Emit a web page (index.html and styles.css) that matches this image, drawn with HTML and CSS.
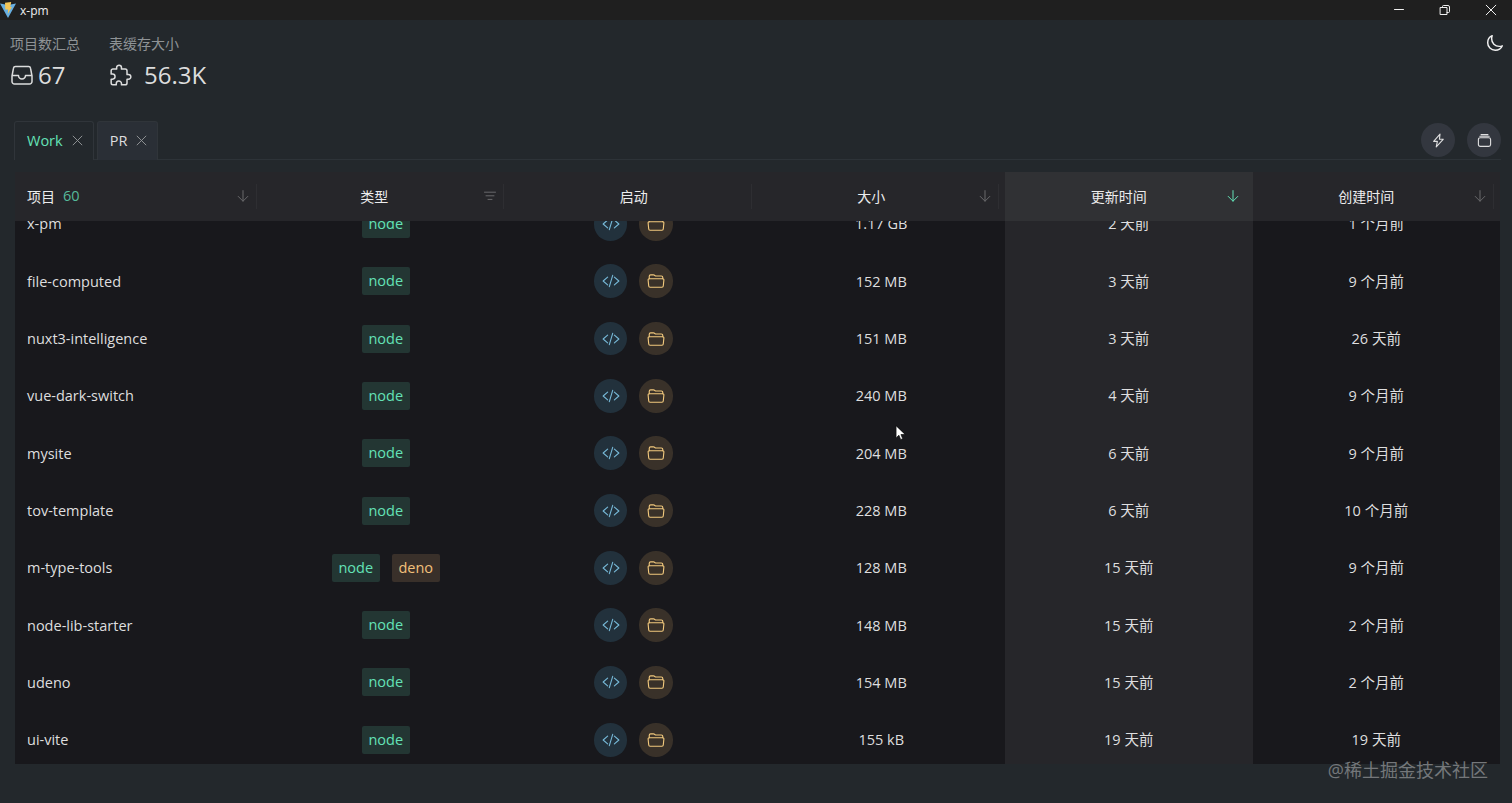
FILE: index.html
```html
<!DOCTYPE html>
<html lang="zh-CN">

<head>
    <meta charset="UTF-8">
    <meta name="viewport" content="width=device-width, initial-scale=1.0">
    <title>x-pm</title>
    <link rel="stylesheet" href="styles.css">
</head>

<body>
    <!-- 图标 -->
    <svg class="icons" width="0" height="0">
        <symbol id="close" viewBox="0 0 12 12">
            <path d="M1.2 1.2l9.6 9.6M10.8 1.2l-9.6 9.6" />
        </symbol>
        <symbol id="arrow" viewBox="0 0 12 12">
            <path d="M6 .6v10.6M1.2 6.4L6 11.2l4.8-4.8" />
        </symbol>
        <symbol id="filter" viewBox="0 0 12 12">
            <path d="M.5 2.2h11M2 5.8h8M4 9.4h4" />
        </symbol>
        <symbol id="code" viewBox="0 0 512 512">
            <path d="M160 368L32 256l128-112M352 368l128-112-128-112M304 96l-96 320" />
        </symbol>
        <symbol id="folder" viewBox="0 0 512 512">
            <path d="M64 192v-72a40 40 0 0 1 40-40h75.900a40 40 0 0 1 22.200 6.700l27.800 18.600a40 40 0 0 0 22.200 6.700H408a40 40 0 0 1 40 40v40" />
            <path d="M480 226.200L463.700 392a40 40 0 0 1-39.900 40H88.100a40 40 0 0 1-39.900-40L32 226.200A32 32 0 0 1 63.900 192H448.100A32 32 0 0 1 480 226.200z" />
        </symbol>
    </svg>

    <div class="main">

        <!-- 窗口标题栏 -->
        <div class="titlebar">
            <svg class="logo" viewBox="0 0 16 16">
                <path fill="#67aee0" d="M0 1.600L8 3l8-1.400L8 16z" />
                <path fill="#f3c556" d="M5 .8L11.200 0l-.9 5h1.600L7.700 12l.5-4.600H5.300z" />
            </svg>
            <span class="name">x-pm</span>
            <div class="win">
                <svg viewBox="0 0 12 12"><path d="M1.500 5.500h9" /></svg>
                <svg viewBox="0 0 12 12">
                    <path d="M1.500 3.500h6.500v7H1.500zM3.500 3.500V2.500q0-1 1-1h4.500q1.500 0 1.500 1.500v4.500q0 1-1 1H8" />
                </svg>
                <svg viewBox="0 0 12 12"><use href="#close" /></svg>
            </div>
        </div>

        <!-- 统计 -->
        <div class="header">
            <div class="stat">
                <div class="label">项目数汇总</div>
                <div class="value">
                    <svg viewBox="0 0 24 24">
                        <path d="M5.500 3.500h13a2 2 0 0 1 2 1.700L22 13v5.500a2.500 2.500 0 0 1-2.500 2.500h-15A2.500 2.500 0 0 1 2 18.500V13l1.500-7.800a2 2 0 0 1 2-1.700zM2 12.500h6.500a3.500 3.500 0 0 0 7 0H22" />
                    </svg>
                    <span>67</span>
                </div>
            </div>
            <div class="stat cache">
                <div class="label">表缓存大小</div>
                <div class="value">
                    <svg viewBox="0 0 512 512">
                        <path d="M413.700 246.100H386a2 2 0 0 1-2-2v-77.200A38.900 38.900 0 0 0 345.100 128H267.900a2 2 0 0 1-2-2V98.300C265.900 70.200 243.500 46.700 215.400 46A51.200 51.200 0 0 0 163 97.200V126a2 2 0 0 1-2 2H83.900A37.900 37.900 0 0 0 46 165.900V235.100a2 2 0 0 0 2 2H75.700C103.800 237.100 128 262.100 128.700 290.200A54.100 54.100 0 0 1 75.900 344.900H48a2 2 0 0 0-2 2V428.100A37.900 37.900 0 0 0 83.900 466h69.200a2 2 0 0 0 2-2V442.100C155.100 411.900 178.500 386.600 208.600 385.200S266 408.200 266 438.200V464a2 2 0 0 0 2 2h77.200A38.900 38.900 0 0 0 384.100 427.100V349.900a2 2 0 0 1 2-2h28.800A51.200 51.200 0 0 0 466 295.600C465.300 267.500 441.800 246.100 413.700 246.100z" />
                    </svg>
                    <span>56.3K</span>
                </div>
            </div>
            <svg class="moon" viewBox="0 0 512 512">
                <path d="M160 136c0-30.600 4.500-61.600 16-88C99.600 81.300 48 159.500 48 248c0 119.300 96.700 216 216 216 88.500 0 166.700-51.600 200-128-26.400 11.500-57.400 16-88 16-119.300 0-216-96.700-216-216z" />
            </svg>
        </div>

        <!-- 标签页 -->
        <div class="tabs">
            <div class="tab active">Work<svg><use href="#close" /></svg></div>
            <div class="tab">PR<svg><use href="#close" /></svg></div>
            <div class="actions">
                <div class="btn">
                    <svg viewBox="0 0 16 16"><path d="M9.600 1.200L2.800 8.900h4L5.600 14.800l7.400-8.100H9z" /></svg>
                </div>
                <div class="btn">
                    <svg viewBox="0 0 16 16">
                        <rect x="1.500" y="5" width="13" height="9.300" rx="2" />
                        <path d="M3 3.400h10M4.300 1.700h7.400" />
                    </svg>
                </div>
            </div>
        </div>

        <!-- 表格 -->
        <div class="table">
            <div class="thead">
                <div class="th first">项目<span class="count">60</span><svg><use href="#arrow" /></svg></div>
                <div class="th filter">类型<svg><use href="#filter" /></svg></div>
                <div class="th plain">启动</div>
                <div class="th">大小<svg><use href="#arrow" /></svg></div>
                <div class="th sorted">更新时间<svg><use href="#arrow" /></svg></div>
                <div class="th">创建时间<svg><use href="#arrow" /></svg></div>
            </div>
            <div class="tbody">
                <div class="rows"></div>
            </div>
        </div>

        <div class="watermark">@稀土掘金技术社区</div>

        <svg class="cursor" viewBox="0 0 12 18">
            <path d="M1 1v13.500l3.200-3 2 4.900 2.300-1-2-4.700H11z" />
        </svg>
    </div>

    <script>
        const list = [
            ['x-pm', ['node'], '1.17 GB', '2 天前', '1 个月前'],
            ['file-computed', ['node'], '152 MB', '3 天前', '9 个月前'],
            ['nuxt3-intelligence', ['node'], '151 MB', '3 天前', '26 天前'],
            ['vue-dark-switch', ['node'], '240 MB', '4 天前', '9 个月前'],
            ['mysite', ['node'], '204 MB', '6 天前', '9 个月前'],
            ['tov-template', ['node'], '228 MB', '6 天前', '10 个月前'],
            ['m-type-tools', ['node', 'deno'], '128 MB', '15 天前', '9 个月前'],
            ['node-lib-starter', ['node'], '148 MB', '15 天前', '2 个月前'],
            ['udeno', ['node'], '154 MB', '15 天前', '2 个月前'],
            ['ui-vite', ['node'], '155 kB', '19 天前', '19 天前']
        ];

        let rows = document.querySelector('.rows');

        rows.innerHTML = list.map(([name, types, size, update, create]) => `
            <div class="row">
                <div class="td first">${name}</div>
                <div class="td types">${types.map(t => `<span class="tag ${t}">${t}</span>`).join('')}</div>
                <div class="td open">
                    <span class="circle code"><svg><use href="#code" /></svg></span>
                    <span class="circle folder"><svg><use href="#folder" /></svg></span>
                </div>
                <div class="td">${size}</div>
                <div class="td date sorted">${update}</div>
                <div class="td date">${create}</div>
            </div>`).join('');
    </script>
</body>

</html>
```
FILE: styles.css
```css
* {
    box-sizing: border-box;
}

body {
    margin: 0;
    background-color: #23282c;
    color: #dededf;
    font-family: "Open Sans", "Noto Sans CJK SC", sans-serif;
    font-size: 14.5px;
}

svg {
    display: block;
    flex: none;
    fill: none;
    stroke: currentColor;
    stroke-linecap: round;
    stroke-linejoin: round;
}

.icons {
    position: absolute;
}

.main {
    position: relative;
    display: flex;
    flex-direction: column;
    height: 803px;
    overflow: hidden;
}

/* 标题栏 */
.titlebar {
    display: flex;
    align-items: center;
    height: 20px;
    background-color: #1f1f1f;
    color: #f0f0f0;
    font-size: 12px;
}

.logo {
    width: 16px;
    height: 16px;
    stroke: none;
}

.name {
    margin-left: 4px;
}

.win {
    display: flex;
    gap: 34px;
    margin-left: auto;
    padding-right: 15px;
}

.win svg {
    width: 12px;
    height: 12px;
}

/* 统计 */
.header {
    display: flex;
    height: 101px;
    padding: 14px 9px 0 10px;
}

.stat {
    width: 99px;
}

.label {
    height: 20px;
    line-height: 20px;
    font-size: 14px;
    color: #8f9396;
}

.value {
    display: flex;
    align-items: center;
    gap: 4px;
    height: 42px;
    font-size: 24px;
    color: #dcdddd;
}

.value span {
    padding-bottom: 2px;
}

.value svg {
    width: 24px;
    height: 24px;
    stroke-width: 1.5;
}

.cache .value {
    gap: 11px;
}

.cache svg {
    stroke-width: 32;
}

.moon {
    width: 18px;
    height: 18px;
    margin: 0 -1px 0 auto;
    color: #f0f0f0;
    stroke-width: 42;
}

/* 标签页 */
.tabs {
    display: flex;
    gap: 3px;
    height: 39px;
    margin: 0 11px 0 14px;
    border-bottom: 1px solid #2d3338;
}

.tab {
    display: flex;
    align-items: center;
    gap: 9px;
    height: 39px;
    padding: 0 10px 2px 12px;
    border: 1px solid #30353a;
    border-bottom: 0;
    border-radius: 3px 3px 0 0;
    background-color: #2a2f36;
}

.tab.active {
    background-color: #23282c;
    color: #63e2b7;
}

.tab svg {
    width: 11px;
    height: 11px;
    color: #96999b;
}

.actions {
    display: flex;
    gap: 12px;
    margin-left: auto;
    padding-top: 2px;
}

.btn {
    display: flex;
    align-items: center;
    justify-content: center;
    width: 34px;
    height: 34px;
    border-radius: 50%;
    background-color: #33373f;
}

.btn svg {
    width: 15px;
    height: 15px;
    stroke-width: 1.2;
}

/* 表格 */
.table {
    width: 1485px;
    margin: 12px 0 0 15px;
}

.thead,
.row {
    display: grid;
    grid-template-columns: repeat(6, 1fr);
}

.thead {
    height: 49px;
    background-color: #26262a;
    color: #ececed;
}

.th {
    display: flex;
    align-items: center;
    justify-content: center;
    position: relative;
    padding-right: 20px;
    padding-bottom: 2px;
    font-size: 14px;
}

.th svg {
    position: absolute;
    right: 14px;
    width: 12px;
    height: 12px;
    color: #68686b;
}

.th::after {
    content: "";
    position: absolute;
    right: 6px;
    top: 12px;
    width: 1px;
    height: 25px;
    background-color: #2e2e32;
}

.th.first,
.td.first {
    justify-content: flex-start;
    padding-left: 12px;
}

.th.filter {
    padding-right: 24px;
}

.th.plain {
    padding-right: 0;
}

.th.sorted {
    background-color: #303134;
}

.th.sorted::after {
    display: none;
}

.th.sorted svg {
    color: #63e2b7;
}

.count {
    margin-left: 8px;
    font-size: 14.5px;
    color: #56b99a;
}

.tbody {
    height: 543px;
    overflow: hidden;
    background-color: #18181c;
}

/* 列表已向下滚动 */
.rows {
    margin-top: -25.8px;
}

.row {
    height: 57.33px;
}

.td {
    display: flex;
    align-items: center;
    justify-content: center;
}

.td.date {
    padding-bottom: 2px;
}

.td.sorted {
    background-color: #26262a;
}

.types,
.open {
    gap: 12px;
    padding-right: 1px;
}

.tag {
    width: 48px;
    height: 28px;
    line-height: 27px;
    border-radius: 2px;
    text-align: center;
}

.node {
    background-color: #233633;
    color: #63e2b7;
}

.deno {
    background-color: #39302a;
    color: #f2c07b;
}

.circle {
    display: flex;
    align-items: center;
    justify-content: center;
    width: 33.5px;
    height: 33.5px;
    border-radius: 50%;
}

.circle svg {
    width: 18px;
    height: 18px;
    stroke-width: 32;
}

.circle.code {
    background-color: #22313c;
    color: #77b9d8;
}

.circle.folder {
    background-color: #393129;
    color: #f2c97d;
}

.watermark {
    position: absolute;
    right: 24px;
    bottom: 20px;
    font-size: 18px;
    line-height: 26px;
    color: #74777a;
}

.cursor {
    position: absolute;
    left: 895px;
    top: 425px;
    width: 11px;
    height: 16px;
    fill: #fff;
    stroke: #111;
    stroke-width: .8;
}
```
